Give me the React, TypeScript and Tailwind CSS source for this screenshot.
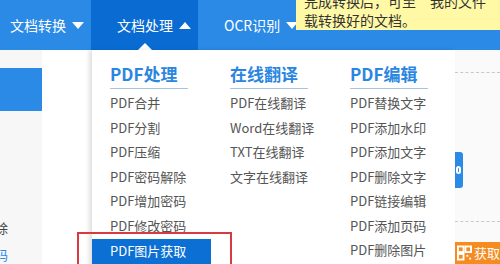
import React from "react";

const font = { fontFamily: '"Microsoft YaHei", "Noto Sans CJK SC", sans-serif' };

const columns = [
  {
    title: "PDF处理",
    items: ["PDF合并", "PDF分割", "PDF压缩", "PDF密码解除", "PDF增加密码", "PDF修改密码", "PDF图片获取"],
  },
  {
    title: "在线翻译",
    items: ["PDF在线翻译", "Word在线翻译", "TXT在线翻译", "文字在线翻译"],
  },
  {
    title: "PDF编辑",
    items: ["PDF替换文字", "PDF添加水印", "PDF添加文字", "PDF删除文字", "PDF链接编辑", "PDF添加页码", "PDF删除图片"],
  },
];

function Caret({ up }: { up?: boolean }) {
  return (
    <svg width="12" height="7" viewBox="0 0 12 7" className="ml-[6px]">
      <path d={up ? "M0 7 L6 0 L12 7 Z" : "M0 0 L12 0 L6 7 Z"} fill="#fff" />
    </svg>
  );
}

export default function App() {
  return (
    <div className="relative w-[500px] h-[264px] overflow-hidden bg-white text-[#555]" style={font}>
      {/* Nav bar */}
      <div className="flex h-[50px] bg-[#2a8ae6] text-white text-[14px]">
        <div className="flex items-center pl-[10px] w-[91px]">
          文档转换
          <Caret />
        </div>
        <div className="relative flex items-center pl-[26px] w-[107px] bg-[#0a6cd2]">
          文档处理
          <Caret up />
          <div className="absolute left-[47px] bottom-0 w-0 h-0 border-l-[7px] border-r-[7px] border-b-[7px] border-l-transparent border-r-transparent border-b-white" />
        </div>
        <div className="flex items-center pl-[26px]">
          OCR识别
          <Caret />
        </div>
      </div>

      {/* Page body */}
      <div className="flex h-[214px]">
        <div className="w-[42px] bg-[#f7f7f7] pt-[18px] flex flex-col">
          <div className="h-[43px] bg-[#2a8ae6]" />
          <div className="mt-[110px] text-[13px] text-[#444] -ml-[5px] leading-none">除</div>
          <div className="mt-[14px] text-[13px] text-[#2a8ae6] -ml-[5px] leading-none">码</div>
        </div>
        <div className="flex-1" />
        <div className="w-[45px] bg-[#fafafa] flex flex-col pt-[22px]">
          <div className="border-t border-dashed border-[#c8c8c8]" />
          <div className="mt-[79px] w-[8px] h-[36px] bg-[#2a8ae6] rounded-r-[3px] flex items-center">
            <div className="w-[5px] h-[8px] rounded-full border-2 border-white ml-[1px]" />
          </div>
          <div className="mt-[33px] border-t border-dashed border-[#c8c8c8]" />
          <div className="mt-[20px] h-[22px] bg-[#f68b1f] flex items-center pl-[2px] gap-[2px] text-white text-[13px]">
            <svg width="16" height="16" viewBox="0 0 16 16">
              <rect x="1" y="1" width="6" height="6" fill="none" stroke="#fff" strokeWidth="2" />
              <rect x="9" y="1" width="6" height="6" fill="none" stroke="#fff" strokeWidth="2" />
              <rect x="1" y="9" width="6" height="6" fill="none" stroke="#fff" strokeWidth="2" />
              <rect x="10" y="10" width="2" height="2" fill="#fff" />
              <rect x="13" y="13" width="2" height="2" fill="#fff" />
            </svg>
            <span className="whitespace-nowrap">获取</span>
          </div>
        </div>
      </div>

      {/* Dropdown */}
      <div className="absolute left-[92px] top-[50px] w-[363px] h-[220px] bg-white shadow-[-3px_0_4px_rgba(0,0,0,0.12)] flex pl-[18px] pt-[12px]">
        {columns.map((col) => (
          <div key={col.title} className="w-[120px] shrink-0">
            <div className="text-[17px] font-bold text-[#2a86e0] leading-[23px] w-[78px] pb-[3px] border-b border-[#a9c3e3]">
              {col.title}
            </div>
            <div className="mt-[2px]">
              {col.items.map((it) => (
                <div
                  key={it}
                  className={
                    it === "PDF图片获取"
                      ? "-ml-[18px] pl-[18px] w-[119px] h-[24.5px] leading-[24px] text-[13px] text-white bg-[#0b6fd4] mt-[1px]"
                      : "h-[24.5px] leading-[24px] text-[13px] text-[#555] whitespace-nowrap"
                  }
                >
                  {it}
                </div>
              ))}
            </div>
          </div>
        ))}
      </div>

      {/* Red highlight box */}
      <div className="absolute left-[77px] top-[232px] w-[155px] h-[40px] border-2 border-[#d83a3f]" />

      {/* Tooltip */}
      <div className="absolute left-[296px] -top-[8px] w-[210px] h-[38px] bg-[#fff9a6] text-[14px] text-[#333] leading-[19px] pl-[8px]">
        <div className="whitespace-nowrap">完成转换后，可至“我的文件”中直</div>
        <div>载转换好的文档。</div>
      </div>
    </div>
  );
}
